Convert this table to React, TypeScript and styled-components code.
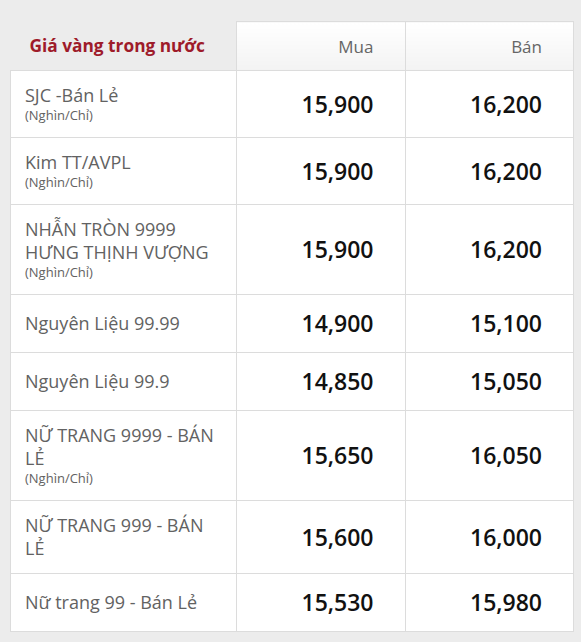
import React from "react";
import styled, { createGlobalStyle } from "styled-components";

const GlobalStyle = createGlobalStyle`
  html, body {
    margin: 0;
    padding: 0;
    background: #ececec;
    font-family: "Open Sans", "Liberation Sans", sans-serif;
  }
`;

const Wrap = styled.div`
  padding: 21px 7px 10px 10px;
`;

const Table = styled.table`
  width: 564px;
  border-collapse: collapse;
  table-layout: fixed;
`;

const TitleCell = styled.th`
  width: 226px;
  padding: 0 0 0 19px;
  text-align: left;
  font-size: 17.3px;
  font-weight: 700;
  color: #9e1b2a;
  line-height: 23px;
  height: 48px;
  box-sizing: border-box;
`;

const HeadCell = styled.th`
  border: 1px solid #dcdcdc;
  border-bottom: none;
  background: linear-gradient(to bottom, #ffffff 0%, #f3f3f3 100%);
  text-align: right;
  padding: 0 31px 0 0;
  font-size: 17px;
  font-weight: 400;
  color: #666;
  height: 48px;
`;

const Row = styled.tr`
  background: #fff;
`;

const NameCell = styled.td`
  border: 1px solid #dcdcdc;
  padding: 13px 14px 13px 14px;
  vertical-align: middle;
  color: #626262;
`;

const Name = styled.div`
  font-size: 18px;
  line-height: 23px;
`;

const Unit = styled.div`
  font-size: 13px;
  line-height: 17px;
`;

const PriceCell = styled.td`
  border: 1px solid #dcdcdc;
  padding: 13px 31px 13px 0;
  text-align: right;
  vertical-align: middle;
  font-size: 23px;
  line-height: 31px;
  font-weight: 600;
  color: #111;
`;

interface priceType {
  name: string;
  unit?: boolean;
  buy: string;
  sell: string;
}

const prices: priceType[] = [
  { name: "SJC -Bán Lẻ", unit: true, buy: "15,900", sell: "16,200" },
  { name: "Kim TT/AVPL", unit: true, buy: "15,900", sell: "16,200" },
  {
    name: "NHẪN TRÒN 9999 HƯNG THỊNH VƯỢNG",
    unit: true,
    buy: "15,900",
    sell: "16,200",
  },
  { name: "Nguyên Liệu 99.99", buy: "14,900", sell: "15,100" },
  { name: "Nguyên Liệu 99.9", buy: "14,850", sell: "15,050" },
  { name: "NỮ TRANG 9999 - BÁN LẺ", unit: true, buy: "15,650", sell: "16,050" },
  { name: "NỮ TRANG 999 - BÁN LẺ", buy: "15,600", sell: "16,000" },
  { name: "Nữ trang 99 - Bán Lẻ", buy: "15,530", sell: "15,980" },
];

export default function App() {
  return (
    <>
      <GlobalStyle />
      <Wrap>
        <Table>
          <thead>
            <tr>
              <TitleCell>Giá vàng trong nước</TitleCell>
              <HeadCell>Mua</HeadCell>
              <HeadCell>Bán</HeadCell>
            </tr>
          </thead>
          <tbody>
            {prices.map((p) => (
              <Row key={p.name}>
                <NameCell>
                  <Name>{p.name}</Name>
                  {p.unit && <Unit>(Nghìn/Chỉ)</Unit>}
                </NameCell>
                <PriceCell>{p.buy}</PriceCell>
                <PriceCell>{p.sell}</PriceCell>
              </Row>
            ))}
          </tbody>
        </Table>
      </Wrap>
    </>
  );
}
